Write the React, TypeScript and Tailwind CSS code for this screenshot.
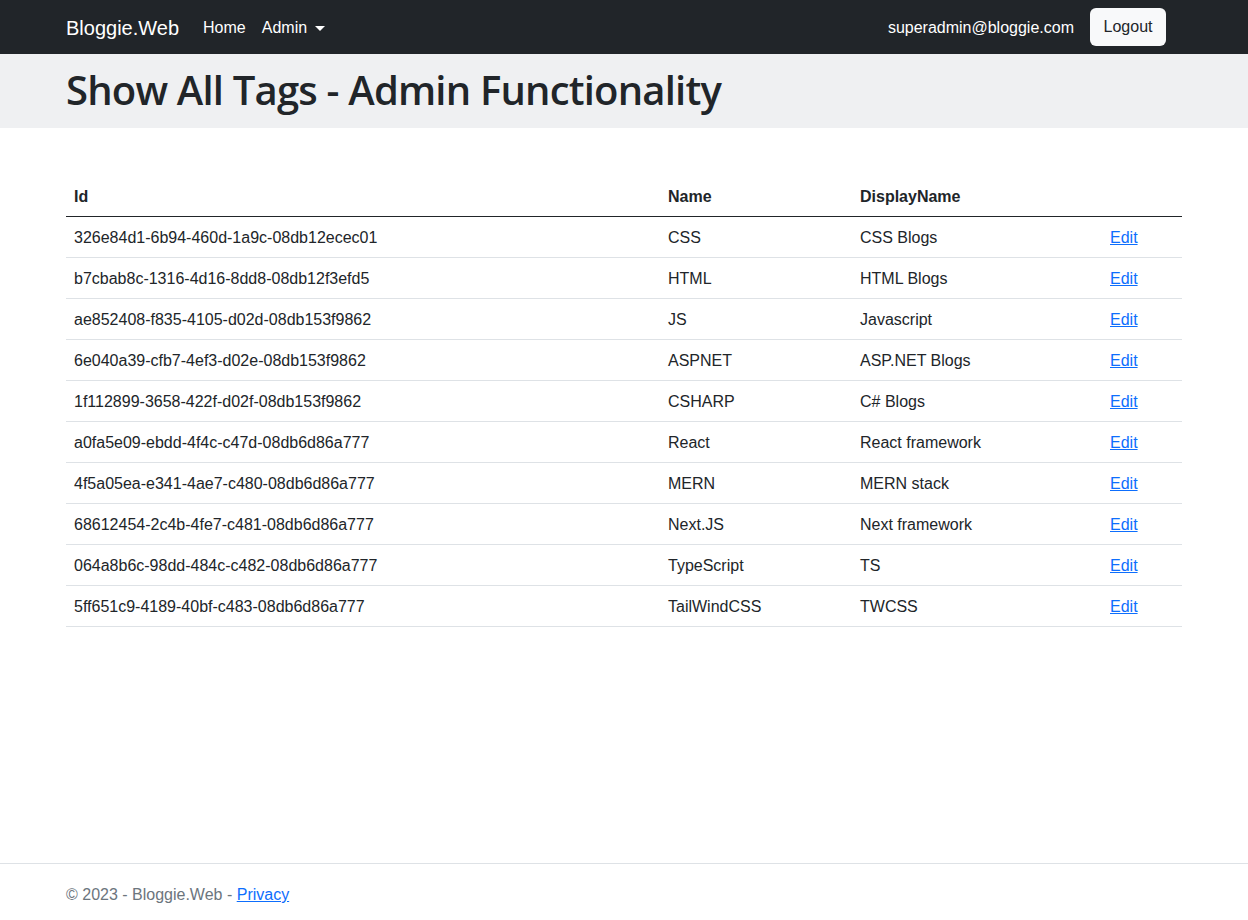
import React from "react";

const tags = [
  { id: "326e84d1-6b94-460d-1a9c-08db12ecec01", name: "CSS", display: "CSS Blogs" },
  { id: "b7cbab8c-1316-4d16-8dd8-08db12f3efd5", name: "HTML", display: "HTML Blogs" },
  { id: "ae852408-f835-4105-d02d-08db153f9862", name: "JS", display: "Javascript" },
  { id: "6e040a39-cfb7-4ef3-d02e-08db153f9862", name: "ASPNET", display: "ASP.NET Blogs" },
  { id: "1f112899-3658-422f-d02f-08db153f9862", name: "CSHARP", display: "C# Blogs" },
  { id: "a0fa5e09-ebdd-4f4c-c47d-08db6d86a777", name: "React", display: "React framework" },
  { id: "4f5a05ea-e341-4ae7-c480-08db6d86a777", name: "MERN", display: "MERN stack" },
  { id: "68612454-2c4b-4fe7-c481-08db6d86a777", name: "Next.JS", display: "Next framework" },
  { id: "064a8b6c-98dd-484c-c482-08db6d86a777", name: "TypeScript", display: "TS" },
  { id: "5ff651c9-4189-40bf-c483-08db6d86a777", name: "TailWindCSS", display: "TWCSS" },
];

export default function App() {
  return (
    <div className="min-h-[920px] flex flex-col bg-white text-[#212529] font-['Liberation_Sans',Arial,sans-serif] text-[16px]">
      {/* navbar */}
      <nav className="bg-[#212529] h-[54px]">
        <div className="w-[1116px] mx-auto h-full flex items-center pt-[2px]">
          <a className="text-white text-[20px] mr-[16px]">Bloggie.Web</a>
          <a className="text-white px-[8px]">Home</a>
          <a className="text-white px-[8px] flex items-center">
            Admin
            <span className="ml-[8px] w-0 h-0 border-x-[5px] border-x-transparent border-t-[5px] border-t-white"></span>
          </a>
          <div className="ml-auto mr-[16px] flex items-center">
            <span className="text-white mr-[16px]">superadmin@bloggie.com</span>
            <button className="bg-[#f8f9fa] text-[#212529] rounded-[6px] h-[38px] w-[76px] -mt-[2px]">Logout</button>
          </div>
        </div>
      </nav>

      {/* header */}
      <div className="bg-[#eff0f2] h-[74px]">
        <div className="w-[1116px] mx-auto pt-[12px]">
          <h1 className="text-[40px] leading-[48px] font-semibold font-['Open_Sans',sans-serif] tracking-[-0.8px]">
            Show All Tags - Admin Functionality
          </h1>
        </div>
      </div>

      {/* table */}
      <div className="w-[1116px] mx-auto mt-[48px]">
        <table className="w-full border-collapse text-left">
          <thead>
            <tr className="border-b border-[#212529]">
              <th className="w-[594px] px-[8px] pt-[9px] pb-[7px] font-bold">Id</th>
              <th className="w-[192px] px-[8px] pt-[9px] pb-[7px] font-bold">Name</th>
              <th className="w-[250px] px-[8px] pt-[9px] pb-[7px] font-bold">DisplayName</th>
              <th className="px-[8px] pt-[9px] pb-[7px]"></th>
            </tr>
          </thead>
          <tbody>
            {tags.map((t) => (
              <tr key={t.id} className="border-b border-[#dee2e6]">
                <td className="px-[8px] pt-[9px] pb-[7px] leading-[24px]">{t.id}</td>
                <td className="px-[8px] pt-[9px] pb-[7px] leading-[24px]">{t.name}</td>
                <td className="px-[8px] pt-[9px] pb-[7px] leading-[24px]">{t.display}</td>
                <td className="px-[8px] pt-[9px] pb-[7px] leading-[24px]">
                  <a className="text-[#0d6efd] underline">Edit</a>
                </td>
              </tr>
            ))}
          </tbody>
        </table>
      </div>

      {/* footer */}
      <footer className="mt-auto border-t border-[#dee2e6] h-[57px]">
        <div className="w-[1116px] mx-auto leading-[62px] text-[#6c757d]">
          © 2023 - Bloggie.Web - <a className="text-[#0d6efd] underline">Privacy</a>
        </div>
      </footer>
    </div>
  );
}
